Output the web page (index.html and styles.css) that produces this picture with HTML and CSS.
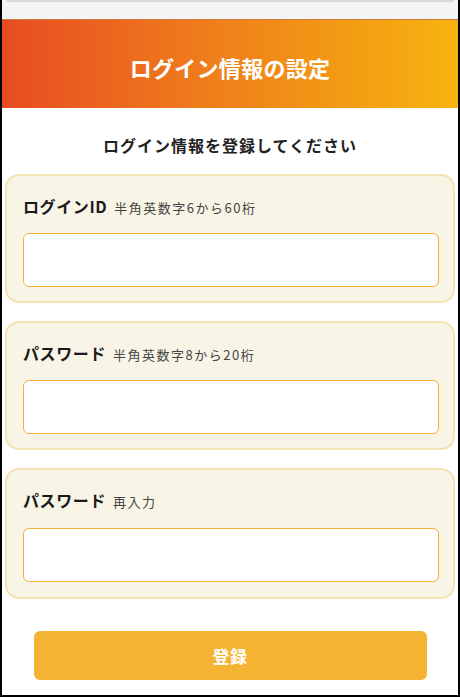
FILE: index.html
```html
<!DOCTYPE html>
<html lang="ja">
<head>
<meta charset="utf-8">
<title>ログイン情報の設定</title>
<link rel="stylesheet" href="styles.css">
</head>
<body>
<div class="frame">
  <div class="topbar"><div class="topbar-edge"></div></div>
  <header class="hero">
    <h1 class="hero-title">ログイン情報の設定</h1>
  </header>
  <main class="content">
    <p class="lead">ログイン情報を登録してください</p>
    <section class="card">
      <label class="label"><span class="label-main">ログインID</span><span class="label-sub">半角英数字6から60桁</span></label>
      <input class="field" type="text">
    </section>
    <section class="card">
      <label class="label"><span class="label-main">パスワード</span><span class="label-sub">半角英数字8から20桁</span></label>
      <input class="field" type="password">
    </section>
    <section class="card card-last">
      <label class="label"><span class="label-main">パスワード</span><span class="label-sub">再入力</span></label>
      <input class="field" type="password">
    </section>
    <div class="actions">
      <button class="submit" type="button">登録</button>
    </div>
  </main>
</div>
</body>
</html>
```
FILE: styles.css
```css
html, body {
  margin: 0;
  padding: 0;
  background: #ffffff;
}
body {
  font-family: "Noto Sans CJK JP", "Noto Sans", sans-serif;
  color: #1a1a1a;
}
.frame {
  box-sizing: border-box;
  width: 460px;
  height: 697px;
  border: 2px solid #000;
  border-top: 0;
  overflow: hidden;
  background: #fff;
}
.topbar {
  height: 19px;
  background: #f3f4f6;
  border-bottom: 1px solid #d9793a;
}
.topbar-edge {
  height: 2px;
  margin: 0 4px;
  background: #d8d8da;
  border-radius: 0 0 6px 6px;
}
.hero {
  height: 88px;
  display: flex;
  align-items: center;
  justify-content: center;
  background: linear-gradient(to right, #e84c22 0%, #ef7d1b 45%, #f6b40f 100%);
}
.hero-title {
  margin: 6px 0 0;
  font-size: 22px;
  font-weight: 700;
  color: #fff;
  letter-spacing: 0.3px;
}
.content {
  padding: 0 3px;
}
.lead {
  margin: 25px 0 17px;
  text-align: center;
  font-size: 16px;
  line-height: 24px;
  font-weight: 700;
  letter-spacing: 1px;
  color: #222;
}
.card {
  box-sizing: border-box;
  height: 129px;
  margin-bottom: 18px;
  padding: 18px 14px 14px 16px;
  background: #f8f4e6;
  border: 2px solid #f3e2b2;
  border-radius: 14px;
  display: flex;
  flex-direction: column;
}
.card-last {
  height: 131px;
  margin-bottom: 0;
}
.label {
  display: flex;
  align-items: baseline;
  gap: 7px;
  height: 24px;
  line-height: 24px;
  margin-bottom: 15px;
}
.label-main {
  font-size: 16px;
  font-weight: 700;
  letter-spacing: 0.6px;
  color: #1a1a1a;
}
.label-sub {
  font-size: 13px;
  letter-spacing: 1.5px;
  color: #444;
}
.field {
  box-sizing: border-box;
  height: 54px;
  width: 100%;
  border: 1px solid #f6b03a;
  border-radius: 6px;
  background: #fff;
  outline: none;
  font: inherit;
}
.card-last .field {
  margin-top: 1px;
}
.actions {
  display: flex;
  justify-content: center;
  padding-top: 32px;
}
.submit {
  width: 393px;
  height: 49px;
  border: 0;
  border-radius: 6px;
  background: #f4b332;
  color: #fff;
  font-family: inherit;
  font-size: 17px;
  font-weight: 700;
  letter-spacing: 0.5px;
}
```
